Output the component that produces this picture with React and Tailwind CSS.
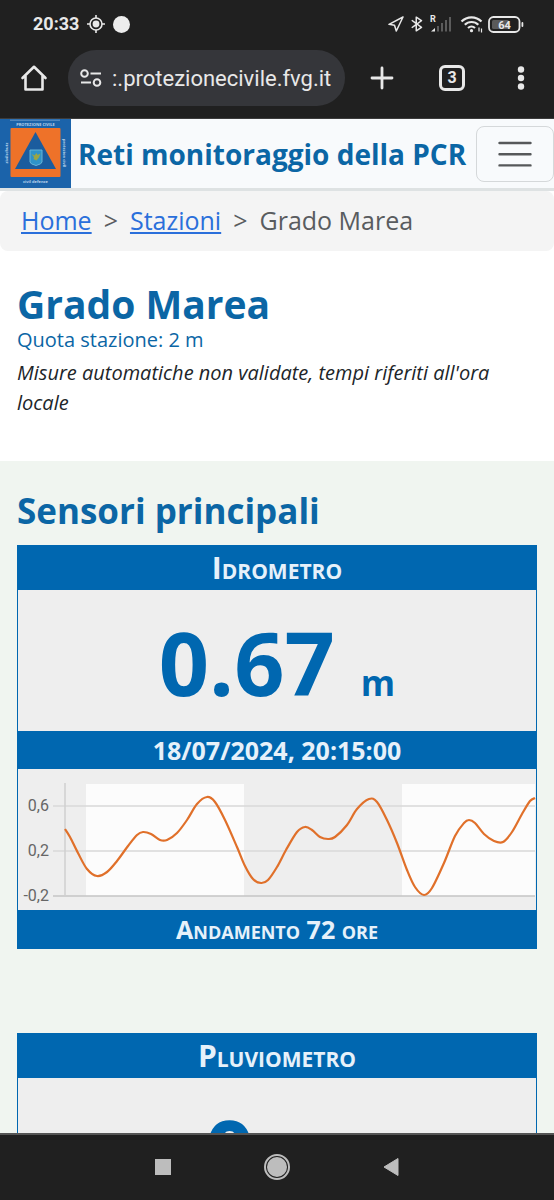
import React from "react";
import { BiBluetooth } from "react-icons/bi";

const tide = [
  [47, 60], [52, 68], [60, 84], [69, 100], [79, 107], [89, 103], [99, 92],
  [110, 77], [119, 66], [125, 63], [133, 65], [142, 71], [149, 71], [159, 64],
  [169, 51], [179, 35], [189, 28], [197, 33], [207, 51], [219, 78], [227, 97],
  [235, 110], [243, 114], [250, 111], [259, 98], [268, 81], [279, 63],
  [287, 58], [294, 61], [302, 68], [310, 70], [317, 68], [329, 56], [339, 40],
  [351, 30], [359, 33], [369, 51], [379, 74], [389, 101], [397, 118],
  [406, 126], [414, 119], [426, 94], [437, 67], [446, 54], [451, 51],
  [457, 54], [466, 65], [476, 72], [485, 73], [494, 63], [504, 45],
  [512, 32], [517, 29],
];

const ticks = [
  { label: "0,6", y: 37 },
  { label: "0,2", y: 82 },
  { label: "-0,2", y: 127 },
];

// Catmull-Rom through the samples
const smoothPath = (pts) => {
  let d = `M${pts[0][0]} ${pts[0][1]}`;
  for (let i = 0; i < pts.length - 1; i++) {
    const a = pts[i - 1] || pts[i];
    const b = pts[i];
    const c = pts[i + 1];
    const e = pts[i + 2] || c;
    d += ` C${b[0] + (c[0] - a[0]) / 6} ${b[1] + (c[1] - a[1]) / 6} ${
      c[0] - (e[0] - b[0]) / 6
    } ${c[1] - (e[1] - b[1]) / 6} ${c[0]} ${c[1]}`;
  }
  return d;
};

function StatusBar() {
  return (
    <div className="flex h-12 items-center justify-between pl-[33px] pr-[30px]">
      <div className="flex items-center gap-2">
        <span className="text-lg font-bold">20:33</span>
        <svg className="h-[18px] w-[18px]" viewBox="0 0 18 18" fill="none" stroke="currentColor">
          <circle cx="9" cy="9" r="6" strokeWidth="1.6" />
          <circle cx="9" cy="9" r="3.4" fill="currentColor" stroke="none" />
          <path d="M9 0v3M9 15v3M0 9h3M15 9h3" strokeWidth="1.6" />
        </svg>
        <span className="h-[17px] w-[17px] rounded-full bg-[#ededed]" />
      </div>
      <div className="flex items-center gap-1">
        <svg className="h-4 w-4" viewBox="0 0 16 16" fill="none" stroke="currentColor" strokeWidth="1.5" strokeLinejoin="round">
          <path d="M15 1 1 8.3l5.5 1L8.3 15Z" />
        </svg>
        <BiBluetooth className="h-[22px] w-[18px]" />
        <svg className="h-[18px] w-[22px]" viewBox="0 0 22 18">
          <text x="0" y="7" fontSize="9" fontWeight="700" fill="currentColor">R</text>
          <path d="M1 16.500 5 13v3.500Z" fill="currentColor" />
          <path d="M7 11h2v5.500H7ZM11 8h2v8.500h-2ZM15 5h2v11.500h-2ZM19 2h2v14.500h-2Z" fill="#5c5c5c" />
        </svg>
        <svg className="ml-1 h-[18px] w-6" viewBox="0 0 24 18" fill="none" stroke="currentColor">
          <path d="M1.500 6.500a14 14 0 0 1 20 0" strokeWidth="2.200" />
          <path d="M4.800 9.800a9.500 9.500 0 0 1 13.500 0" strokeWidth="2.200" />
          <path d="M8 13a5.300 5.300 0 0 1 7 0" strokeWidth="2.200" />
          <circle cx="11.500" cy="15.700" r="1.600" fill="currentColor" stroke="none" />
          <path d="M19 12.500v4M21.500 13.500v4" strokeWidth="1.2" />
        </svg>
        <svg className="h-[17px] w-9" viewBox="0 0 36 17">
          <rect x="1" y="1" width="30.500" height="15" rx="4.500" fill="none" stroke="currentColor" strokeWidth="1.800" />
          <rect x="4" y="4" width="17" height="9" rx="1.500" fill="#5a5a5a" />
          <rect x="33.500" y="6" width="1.800" height="5" rx="0.900" fill="currentColor" />
          <text x="16.500" y="12.500" fontSize="11" fontWeight="700" textAnchor="middle" fill="currentColor">64</text>
        </svg>
      </div>
    </div>
  );
}

function Toolbar() {
  return (
    <div className="flex h-[60px] items-center">
      <button aria-label="Home" className="flex w-[68px] justify-center">
        <svg className="h-7 w-7" viewBox="0 0 28 28" fill="none" stroke="currentColor" strokeWidth="2.600" strokeLinejoin="round" strokeLinecap="round">
          <path d="M2.500 14 14 2.800 25.500 14M5.500 12v13.500h17V12" />
        </svg>
      </button>
      <div className="flex h-14 min-w-0 flex-1 items-center gap-2.5 rounded-full bg-[#35363a] pl-3">
        <svg className="h-5 w-[22px] shrink-0" viewBox="0 0 22 20" fill="none" stroke="currentColor" strokeWidth="2">
          <circle cx="4.500" cy="5.500" r="3.300" />
          <path d="M10.500 5.500H21M1 14.500h10" />
          <circle cx="17" cy="14.500" r="3.300" />
        </svg>
        <input
          aria-label="Indirizzo"
          readOnly
          value=":.protezionecivile.fvg.it"
          className="h-9 min-w-0 flex-1 bg-transparent text-[22px] outline-none"
        />
      </div>
      <div className="flex w-[209px] shrink-0 items-center pl-0.5">
        <button aria-label="Nuova scheda" className="flex w-[70px] justify-center">
          <svg className="h-6 w-6" viewBox="0 0 24 24" stroke="currentColor" strokeWidth="2.800" strokeLinecap="round">
            <path d="M12 2v20M2 12h20" />
          </svg>
        </button>
        <button aria-label="Schede" className="flex w-[70px] justify-center">
          <span className="flex h-[26px] w-[26px] items-center justify-center rounded-md border-3 border-current text-base font-bold leading-none">
            3
          </span>
        </button>
        <button aria-label="Altro" className="flex flex-1 justify-center">
          <svg className="h-6 w-2" viewBox="0 0 8 24" fill="currentColor">
            <circle cx="4" cy="3.500" r="3.200" />
            <circle cx="4" cy="12" r="3.200" />
            <circle cx="4" cy="20.500" r="3.200" />
          </svg>
        </button>
      </div>
    </div>
  );
}

function Logo() {
  return (
    <svg className="h-[69px] w-[71px] shrink-0" viewBox="0 0 71 69" fontFamily="Open Sans, sans-serif" fill="#b9d3ea">
      <rect width="71" height="69" fill="#1b63aa" />
      <path d="M10 1.200h50" stroke="#7ba6cf" strokeWidth="0.800" />
      <text x="35.500" y="7" fontSize="4" fontWeight="700" textAnchor="middle">PROTEZIONE CIVILE</text>
      <text x="35.500" y="64" fontSize="4" textAnchor="middle">civil defence</text>
      <text transform="translate(8 34) rotate(-90)" fontSize="4" textAnchor="middle">zivilschutz</text>
      <text transform="translate(63 34) rotate(90)" fontSize="4" textAnchor="middle">protezion civîl</text>
      <rect x="10.500" y="9" width="50" height="49" rx="1" fill="#ee7229" />
      <path d="M35.500 13 56 50H15Z" fill="#1b5c9e" />
      <path d="M30 31h12v12q0 2-6 3.500-6-1.500-6-3.500Z" fill="#2e93c9" stroke="#67b3d6" />
      <path d="m31.500 35 3 1.500 2-2.500 1 2 3-1.500-1.500 4-2.500 3-3-1.500.5-2Z" fill="#9aa545" />
    </svg>
  );
}

function SiteHeader() {
  return (
    <header className="flex items-center justify-between border-b-3 border-[#dee2e3] bg-[#f8fafc]">
      <a href="#home" className="flex items-center gap-[7px] whitespace-nowrap text-[28px] font-bold leading-9 text-[#0b66a5]">
        <Logo />
        Reti monitoraggio della PCR
      </a>
      <button aria-label="Menu" className="flex h-14 w-[78px] shrink-0 items-center justify-center rounded-lg border border-[#d5d8da]">
        <svg className="h-7 w-[34px]" viewBox="0 0 34 28" stroke="#56585a" strokeWidth="2.400" strokeLinecap="round">
          <path d="M1.500 3h31M1.500 14.200h31M1.500 25.400h31" />
        </svg>
      </button>
    </header>
  );
}

function Breadcrumb() {
  return (
    <nav className="flex h-[60px] items-center gap-3 rounded-lg bg-[#f4f4f4] px-[21px] text-[25px] text-[#595c5f]">
      <a href="#home" className="text-[#2a6fdb] underline">Home</a>
      <span>&gt;</span>
      <a href="#stazioni" className="text-[#2a6fdb] underline">Stazioni</a>
      <span>&gt;</span>
      <span>Grado Marea</span>
    </nav>
  );
}

function TrendChart() {
  return (
    <svg className="block w-full" viewBox="0 0 518 141" fontFamily="Roboto, sans-serif" fontSize="16" fontWeight="400">
      <path d="M68 15h158v112H68ZM384 15h133v112H384Z" fill="#fcfcfc" />
      {ticks.map((t) => (
        <g key={t.label}>
          <path d={`M35 ${t.y}H517`} stroke={t.label === "-0,2" ? "#c4c4c4" : "#d9d9d9"} strokeWidth="1.500" />
          <text x="31" y={t.y + 5} textAnchor="end" fill="#666">
            {t.label}
          </text>
        </g>
      ))}
      <path d="M47 14v113" stroke="#cfcfcf" strokeWidth="1.500" />
      <path d={smoothPath(tide)} fill="none" stroke="#e0702a" strokeWidth="2.200" strokeLinejoin="round" />
    </svg>
  );
}

function SensorCard({ title, value, unit, date }) {
  return (
    <article className="border border-[#0067b0] bg-[#eee] text-center font-bold text-[#0067b0]">
      <h3 className="bg-[#0067b0] text-[30px] leading-11 text-[#e6f1fa] [font-variant:small-caps]">
        {title}
      </h3>
      <p className="flex h-[141px] items-baseline justify-center gap-[26px]">
        <span className="text-[88px] leading-[144px]">{value}</span>
        <span className="text-[35px]">{unit}</span>
      </p>
      <p className="bg-[#0067b0] text-[25px] leading-[38px] text-[#e6f1fa]">{date}</p>
      <TrendChart />
      <p className="bg-[#0067b0] text-[25px] leading-[38px] text-[#e6f1fa] [font-variant:small-caps]">
        Andamento 72 ore
      </p>
    </article>
  );
}

function App() {
  return (
    <div className="flex h-screen flex-col bg-[#202020] font-['Roboto',sans-serif] text-[#e8e8e8]">
      <div className="h-[119px] shrink-0 border-b border-[#3c3c3c]">
        <StatusBar />
        <Toolbar />
      </div>

      <div className="min-h-0 flex-1 overflow-hidden bg-white font-['Open_Sans',sans-serif]">
        <SiteHeader />
        <Breadcrumb />
        <section className="px-[17px] pb-[43px] pt-[29px] text-[#0b66a5]">
          <h1 className="text-[39px] font-bold leading-12">Grado Marea</h1>
          <p className="text-xl leading-6">Quota stazione: 2 m</p>
          <p className="pt-1.5 text-xl italic leading-[30px] text-[#212529]">
            Misure automatiche non validate, tempi riferiti all'ora locale
          </p>
        </section>
        <main className="bg-[#f0f5f0] px-[17px] pt-6">
          <h2 className="pb-2 text-[35px] font-bold leading-[52px] text-[#0b66a5]">Sensori principali</h2>
          <div className="flex flex-col gap-[84px]">
            <SensorCard title="Idrometro" value="0.67" unit="m" date="18/07/2024, 20:15:00" />
            <SensorCard title="Pluviometro" value="0" unit="mm" date="18/07/2024, 20:15:00" />
          </div>
        </main>
      </div>

      <div className="flex h-[67px] shrink-0 items-center justify-center gap-[93px] border-t-2 border-[#555] pb-0.5 text-[#bdbdbd]">
        <button aria-label="Recenti" className="h-4 w-4 bg-current" />
        <button aria-label="Schermata principale" className="flex h-[26px] w-[26px] items-center justify-center rounded-full border-2 border-current">
          <span className="h-5 w-5 rounded-full bg-current" />
        </button>
        <button aria-label="Indietro">
          <svg className="h-5 w-4" viewBox="0 0 16 20" fill="currentColor">
            <path d="M15 1.500v17L1 10Z" stroke="currentColor" strokeLinejoin="round" />
          </svg>
        </button>
      </div>
    </div>
  );
}

export default App;
